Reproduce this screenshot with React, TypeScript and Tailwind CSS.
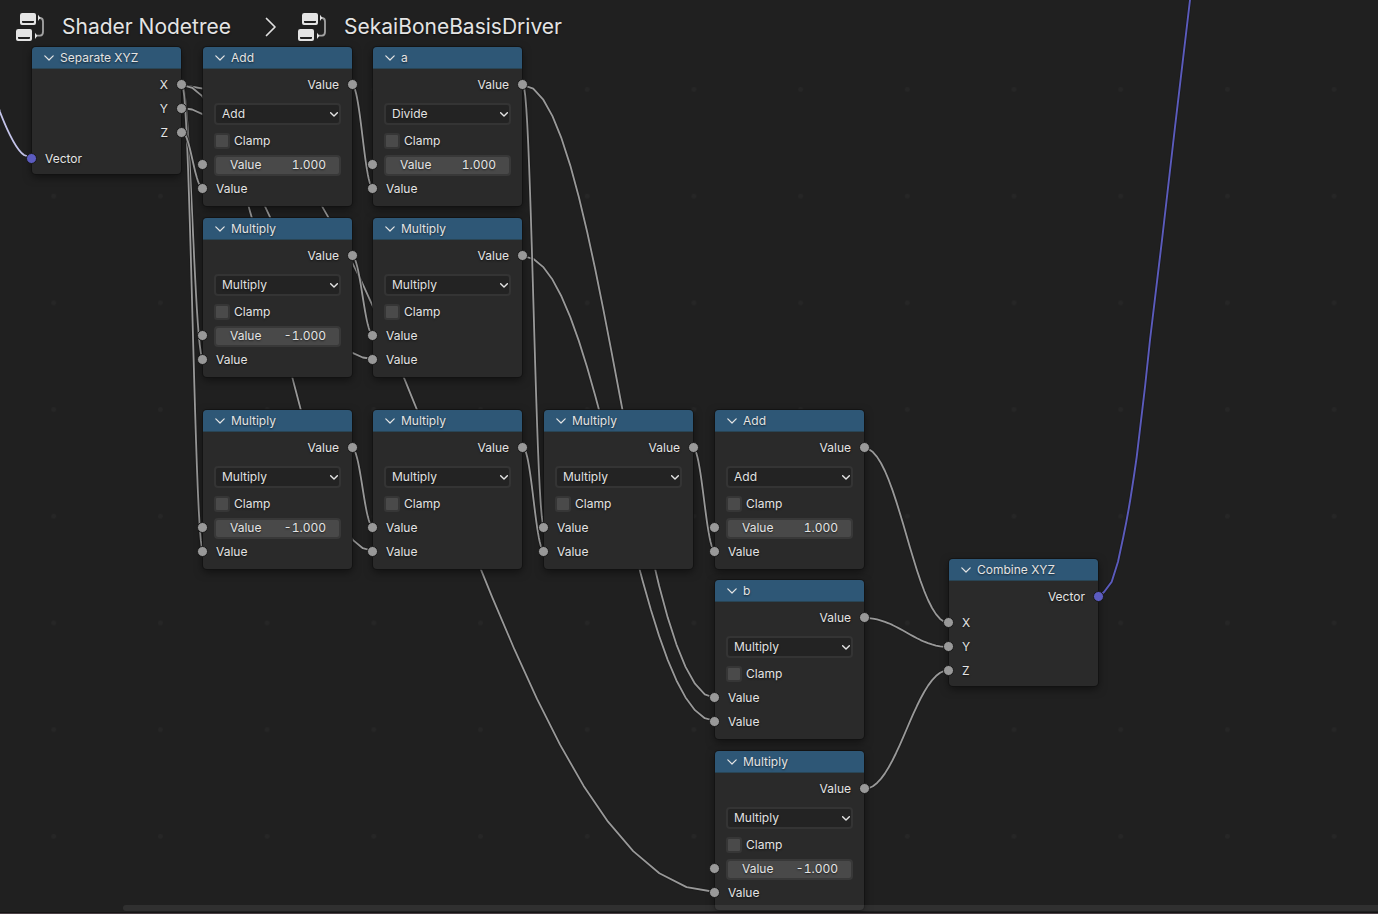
import { useId } from "react";
import type { ReactNode } from "react";

type Point = [number, number];

type MathNodeData = {
  title: string;
  operation: string;
  left: number;
  top: number;
  value?: string;
};

const OPERATIONS = ["Add", "Subtract", "Multiply", "Divide"];

const MATH_NODES: MathNodeData[] = [
  { title: "Add", operation: "Add", left: 203, top: 47, value: "1.000" },
  { title: "a", operation: "Divide", left: 373, top: 47, value: "1.000" },
  { title: "Multiply", operation: "Multiply", left: 203, top: 218, value: "-1.000" },
  { title: "Multiply", operation: "Multiply", left: 373, top: 218 },
  { title: "Multiply", operation: "Multiply", left: 203, top: 410, value: "-1.000" },
  { title: "Multiply", operation: "Multiply", left: 373, top: 410 },
  { title: "Multiply", operation: "Multiply", left: 544, top: 410 },
  { title: "Add", operation: "Add", left: 715, top: 410, value: "1.000" },
  { title: "b", operation: "Multiply", left: 715, top: 580 },
  { title: "Multiply", operation: "Multiply", left: 715, top: 751, value: "-1.000" },
];

const LINKS: [Point, Point][] = [
  [[182, 85], [715, 892]],
  [[182, 85], [373, 551]],
  [[182, 108], [373, 359]],
  [[182, 85], [203, 359]],
  [[182, 85], [203, 551]],
  [[182, 132], [203, 188]],
  [[352, 85], [373, 188]],
  [[352, 256], [373, 335]],
  [[352, 448], [373, 527]],
  [[523, 256], [715, 721]],
  [[523, 85], [715, 698]],
  [[523, 85], [544, 527]],
  [[523, 448], [544, 551]],
  [[693, 448], [715, 551]],
  [[864, 448], [949, 623]],
  [[864, 618], [949, 647]],
  [[864, 789], [949, 670]],
];

const VECTOR_OUT =
  "M1098 597 L1104 592 L1111.7 581.7 L1118 561.7 L1123.3 537 Q1127.5 517 1130.7 497 T1136.7 457 L1145 387 L1150 340 L1162 240 L1175 127 L1190 0 L1191 -8";
const VECTOR_IN = "M-6 92 L0 112 Q14 148 24 155 L32 158";

const SEGMENTS = 22;

/* A link is a cubic curve with horizontal handles, drawn in straight segments. */
function linkPoints([[x0, y0], [x1, y1]]: [Point, Point]): string {
  const dx = x1 - x0;
  const dy = Math.abs(y1 - y0);
  const handle = 0.4 * dx * Math.min(1, (dy / dx) * 3.5);
  const points: string[] = [];
  for (let i = 0; i <= SEGMENTS; i++) {
    const t = i / SEGMENTS;
    const u = 1 - t;
    const x =
      u * u * u * x0 + 3 * u * u * t * (x0 + handle) + 3 * u * t * t * (x1 - handle) + t * t * t * x1;
    const y = (u * u * u + 3 * u * u * t) * y0 + (3 * u * t * t + t * t * t) * y1;
    points.push(`${x.toFixed(2)},${y.toFixed(2)}`);
  }
  return points.join(" ");
}

function Links() {
  return (
    <svg className="pointer-events-none absolute inset-0 size-full" fill="none" aria-hidden="true">
      <defs>
        <pattern id="grid" x="0.4" y="36.2" width="106.7" height="106.7" patternUnits="userSpaceOnUse">
          <circle cx="53.3" cy="53.3" r="2.4" fill="#262626" />
        </pattern>
      </defs>
      <rect width="100%" height="100%" fill="url(#grid)" />
      {LINKS.map((link, i) => {
        const points = linkPoints(link);
        return (
          <g key={i} strokeLinejoin="round">
            <polyline points={points} stroke="#1a1a1a" strokeOpacity="0.8" strokeWidth="3.6" />
            <polyline points={points} stroke="#999999" strokeWidth="1.8" />
          </g>
        );
      })}
      <path d={VECTOR_IN} stroke="#c4c4ea" strokeWidth="1.8" />
      <path d={VECTOR_OUT} stroke="#1a1a1a" strokeOpacity="0.8" strokeWidth="3.6" />
      <path d={VECTOR_OUT} stroke="#5b5bbd" strokeWidth="1.9" />
    </svg>
  );
}

function Chevron({ className, strokeWidth = 1.2 }: { className: string; strokeWidth?: number }) {
  return (
    <svg viewBox="0 0 10 6" className={className} fill="none" stroke="#e4e4e4" aria-hidden="true">
      <path
        d="M0.8 0.8 L5 5 L9.2 0.8"
        strokeWidth={strokeWidth}
        strokeLinecap="round"
        strokeLinejoin="round"
      />
    </svg>
  );
}

function NodeTreeIcon() {
  return (
    <svg viewBox="0 0 90 90" className="size-[30px]" fill="none" aria-hidden="true">
      <path
        d="M72 18 H76 Q84 19 84 29 V59 Q84 70 75 71 H62"
        stroke="#a2a2a2"
        strokeWidth="5.5"
      />
      <path d="M69 8 L76 17 L69 27 Z M60 62 L67 71 L60 81 Z" fill="#e4e4e4" />
      <path
        fillRule="evenodd"
        fill="#e4e4e4"
        d="M22 3 H57 Q63 3 63 9 V33 Q63 39 57 39 H21 Q15 39 15 33 V10 Q15 3 22 3 Z M21 27 V30 Q21 33 24 33 H54 Q57 33 57 30 V27 Z"
      />
      <path
        fillRule="evenodd"
        fill="#e4e4e4"
        d="M10 51 H45 Q51 51 51 57 V81 Q51 87 45 87 H9 Q3 87 3 81 V58 Q3 51 10 51 Z M9 75 V78 Q9 81 12 81 H42 Q45 81 45 78 V75 Z"
      />
    </svg>
  );
}

function Socket({ side, vector }: { side: "left" | "right"; vector?: boolean }) {
  return (
    <span
      className={`absolute top-[6px] size-[11px] rounded-full border border-[#191919] ${
        vector ? "bg-[#5c5cc0]" : "bg-[#999999]"
      } ${side === "left" ? "-left-[6px]" : "-right-[6px]"}`}
    />
  );
}

function Output({ label, vector }: { label: string; vector?: boolean }) {
  return (
    <div className="relative flex h-6 items-center justify-end pr-[13px]">
      {label}
      <Socket side="right" vector={vector} />
    </div>
  );
}

function Input({ label, vector, height = "h-6" }: { label: string; vector?: boolean; height?: string }) {
  return (
    <div className={`relative flex items-center pl-[13px] ${height}`}>
      <Socket side="left" vector={vector} />
      {label}
    </div>
  );
}

function NodeFrame({
  title,
  left,
  top,
  children,
}: {
  title: string;
  left: number;
  top: number;
  children: ReactNode;
}) {
  return (
    <section
      aria-label={title}
      className="absolute w-[149px] rounded-[4px] bg-[#2a2a2a] shadow-[0_0_0_1px_rgba(18,18,18,0.75),0_3px_9px_rgba(0,0,0,0.5)]"
      style={{ left, top }}
    >
      <header className="flex h-[22px] items-center rounded-t-[4px] border-b border-[#294555] bg-[#2e5776] pl-3">
        <button type="button" aria-label={`Collapse ${title}`} className="mr-[6px] flex h-4 items-center">
          <Chevron className="h-[6px] w-[10px]" />
        </button>
        <h2>{title}</h2>
      </header>
      <div className="pt-1">{children}</div>
    </section>
  );
}

function MathNode({ title, operation, left, top, value }: MathNodeData) {
  const id = useId();
  return (
    <NodeFrame title={title} left={left} top={top}>
      <div className="pb-[6px]">
        <Output label="Value" />
        <div className="relative mx-[11px] mt-[6px] mb-1 flex">
          <select
            aria-label={`${title} operation`}
            defaultValue={operation}
            className="h-[22px] w-full appearance-none rounded-[4px] border-2 border-[#343434] bg-[#232323] pl-[6px] text-[#e2e2e2] [text-shadow:inherit]"
          >
            {OPERATIONS.map((name) => (
              <option key={name}>{name}</option>
            ))}
          </select>
          <Chevron
            strokeWidth={1.8}
            className="pointer-events-none absolute top-[9px] right-[3px] h-[5px] w-2"
          />
        </div>
        <div className="flex h-6 items-center gap-1 px-[11px]">
          <input
            id={`${id}clamp`}
            type="checkbox"
            className="size-4 appearance-none rounded-[3px] border-2 border-[#363636] bg-[#4a4a4a] checked:bg-[#4772b3]"
          />
          <label htmlFor={`${id}clamp`}>Clamp</label>
        </div>
        {value === undefined ? (
          <Input label="Value" />
        ) : (
          <div className="relative flex h-6 items-center px-[11px]">
            <Socket side="left" />
            <div className="flex h-[21px] w-full items-center rounded-[4px] border-2 border-[#383838] bg-[#494949] pr-[13px] pl-[14px]">
              <label htmlFor={`${id}value`}>Value</label>
              <input
                id={`${id}value`}
                type="text"
                defaultValue={value}
                className="w-full min-w-0 bg-transparent text-right tabular-nums [text-shadow:inherit]"
              />
            </div>
          </div>
        )}
        <Input label="Value" height="h-[23px]" />
      </div>
    </NodeFrame>
  );
}

export default function App() {
  return (
    <main className="relative h-screen overflow-hidden bg-[#202020] font-['Inter',sans-serif] text-xs leading-4 text-[#e4e4e4] [text-shadow:0_1px_2px_rgba(0,0,0,0.6)]">
      <Links />

      <nav aria-label="Node tree path" className="relative flex h-[54px] items-center pl-[15px] text-[21px] leading-7">
        <NodeTreeIcon />
        <a href="#shader-nodetree" className="ml-[17px]">
          Shader Nodetree
        </a>
        <svg viewBox="0 0 12 20" className="mr-5 ml-[34px] h-5 w-3" fill="none" stroke="#e0e0e0" aria-hidden="true">
          <path d="M1.5 1.5 L10 10 L1.5 18.5" strokeWidth="1.7" strokeLinecap="round" strokeLinejoin="round" />
        </svg>
        <NodeTreeIcon />
        <a href="#sekai-bone-basis-driver" className="ml-[17px]">
          SekaiBoneBasisDriver
        </a>
      </nav>

      <NodeFrame title="Separate XYZ" left={32} top={47}>
        <div className="flex flex-col gap-[2px] pb-[3px]">
          <div>
            <Output label="X" />
            <Output label="Y" />
            <Output label="Z" />
          </div>
          <Input label="Vector" vector />
        </div>
      </NodeFrame>

      {MATH_NODES.map((node) => (
        <MathNode key={`${node.left}-${node.top}`} {...node} />
      ))}

      <NodeFrame title="Combine XYZ" left={949} top={559}>
        <div className="flex flex-col gap-[2px] pb-[3px]">
          <Output label="Vector" vector />
          <div>
            <Input label="X" />
            <Input label="Y" />
            <Input label="Z" />
          </div>
        </div>
      </NodeFrame>

      <div className="absolute right-0 bottom-[3px] left-[123px] h-[6px] rounded-l-[3px] bg-white/7" />
      <div className="absolute inset-x-0 bottom-0 h-[2px] border-t border-[#141414] bg-[#4a4044]" />
    </main>
  );
}
